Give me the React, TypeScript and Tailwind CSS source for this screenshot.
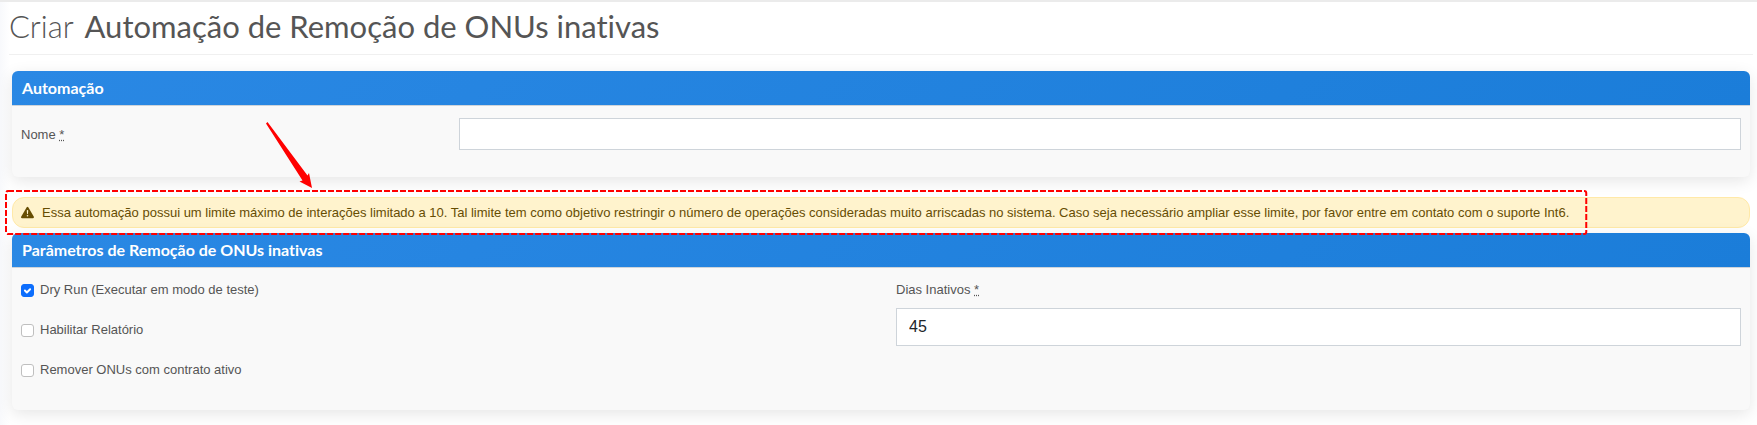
import { useState } from "react";
import type { ReactNode } from "react";

function Card({ title, children }: { title: string; children: ReactNode }) {
    return (
        <section className="rounded-md bg-[#f9f9f9] shadow-[0_4px_16px_rgba(0,0,0,0.1)]">
            <h2 className="flex h-[35px] items-center rounded-t-md border-b border-[#ced4da] bg-[linear-gradient(135deg,#2a88e4_0%,#1b7dd9_100%)] px-2.5 font-['Lato'] text-base font-bold text-white [font-variant-ligatures:none]">
                {title}
            </h2>
            {children}
        </section>
    );
}

function Required() {
    return (
        <abbr title="obrigatório" className="underline decoration-dotted">
            *
        </abbr>
    );
}

function Check({ id, label, checked = false }: { id: string; label: string; checked?: boolean }) {
    const [on, setOn] = useState(checked);

    return (
        <div className="flex h-5 items-center gap-1.5">
            <span className="relative flex size-[13px]">
                <input
                    id={id}
                    type="checkbox"
                    checked={on}
                    onChange={() => setOn(!on)}
                    className="size-[13px] appearance-none rounded-[3px] border border-[#bfbfbf] bg-white checked:border-[#0d6efd] checked:bg-[#0d6efd]"
                />
                {on && (
                    <svg viewBox="0 0 20 20" className="pointer-events-none absolute inset-0 size-[13px]" fill="none" stroke="#fff" strokeWidth="3" strokeLinecap="round" strokeLinejoin="round">
                        <path d="m6 10 3 3 5-5" />
                    </svg>
                )}
            </span>
            <label htmlFor={id}>{label}</label>
        </div>
    );
}

export default function App() {
    return (
        <div className="border-t-2 border-[#ebebeb] bg-[linear-gradient(90deg,#f8f9fc_0px,#ffffff_10px)] pb-[15px] pl-[9px] pr-1 font-['Liberation_Sans',Arial,sans-serif] text-[13px] leading-5 text-[#555]">
            <h1 className="border-b border-[#f0f0f0] pb-2 pt-1 font-['Lato'] text-[31px] font-normal leading-10 text-[#555] [font-variant-ligatures:none]">
                <span className="mr-1 font-light">Criar</span> Automação de Remoção de ONUs inativas
            </h1>

            <main className="pl-[3px] pr-[3px] pt-4">
                <Card title="Automação">
                    <div className="flex items-center gap-2 px-[9px] pb-[27px] pt-3">
                        <label htmlFor="nome" className="w-1/4 pt-0.5">
                            Nome <Required />
                        </label>
                        <input id="nome" type="text" className="h-8 flex-1 border border-[#ced4da] bg-white px-3 text-[#212529]" />
                    </div>
                </Card>

                <div role="alert" className="mb-[5px] mt-5 flex rounded-xl border border-[#ffe9a8] bg-[#fff3cd] px-2 text-[#664d03]">
                    <div className="relative flex items-center gap-2 py-1 leading-[21px]">
                        <svg viewBox="0 0 16 16" className="size-[13px]" fill="currentColor">
                            <path d="M8.982 1.566a1.13 1.13 0 0 0-1.96 0L.165 13.233c-.457.778.091 1.767.98 1.767h13.713c.889 0 1.438-.99.98-1.767L8.982 1.566zM8 5c.535 0 .954.462.9.995l-.35 3.507a.552.552 0 0 1-1.1 0L7.1 5.995A.905.905 0 0 1 8 5zm.002 6a1 1 0 1 1 0 2 1 1 0 0 1 0-2z" />
                        </svg>
                        <p>
                            Essa automação possui um limite máximo de interações limitado a 10. Tal limite tem como objetivo restringir o número de operações consideradas muito arriscadas no sistema. Caso seja necessário ampliar esse limite, por favor entre em contato com o suporte Int6.
                        </p>

                        {/* destaque do aviso */}
                        <div className="pointer-events-none absolute -inset-x-4 -bottom-1.5 -top-2">
                            <svg className="size-full overflow-visible" fill="none" stroke="#f00" strokeWidth="2">
                                <rect x="1" y="1" width="100%" height="100%" rx="2" strokeDasharray="6 2" />
                            </svg>
                        </div>
                        <svg viewBox="0 0 48 68" className="pointer-events-none absolute bottom-full left-[244px] mb-[9px] h-[68px] w-12" fill="#f00">
                            <path d="M1 2.500 2.500 1 42.500 54.500 44 52 47 67 34.500 60.500 37.500 59.500z" />
                        </svg>
                    </div>
                </div>

                <Card title="Parâmetros de Remoção de ONUs inativas">
                    <div className="grid grid-cols-2 gap-[30px] px-[9px] pb-[30px] pt-3">
                        <div className="flex flex-col gap-5">
                            <Check id="dry-run" label="Dry Run (Executar em modo de teste)" checked />
                            <Check id="relatorio" label="Habilitar Relatório" />
                            <Check id="contrato" label="Remover ONUs com contrato ativo" />
                        </div>
                        <div className="flex flex-col gap-2">
                            <label htmlFor="dias">
                                Dias Inativos <Required />
                            </label>
                            <input id="dias" type="text" defaultValue="45" className="h-[38px] w-full border border-[#ced4da] bg-white px-3 text-base text-[#212529]" />
                        </div>
                    </div>
                </Card>
            </main>
        </div>
    );
}
